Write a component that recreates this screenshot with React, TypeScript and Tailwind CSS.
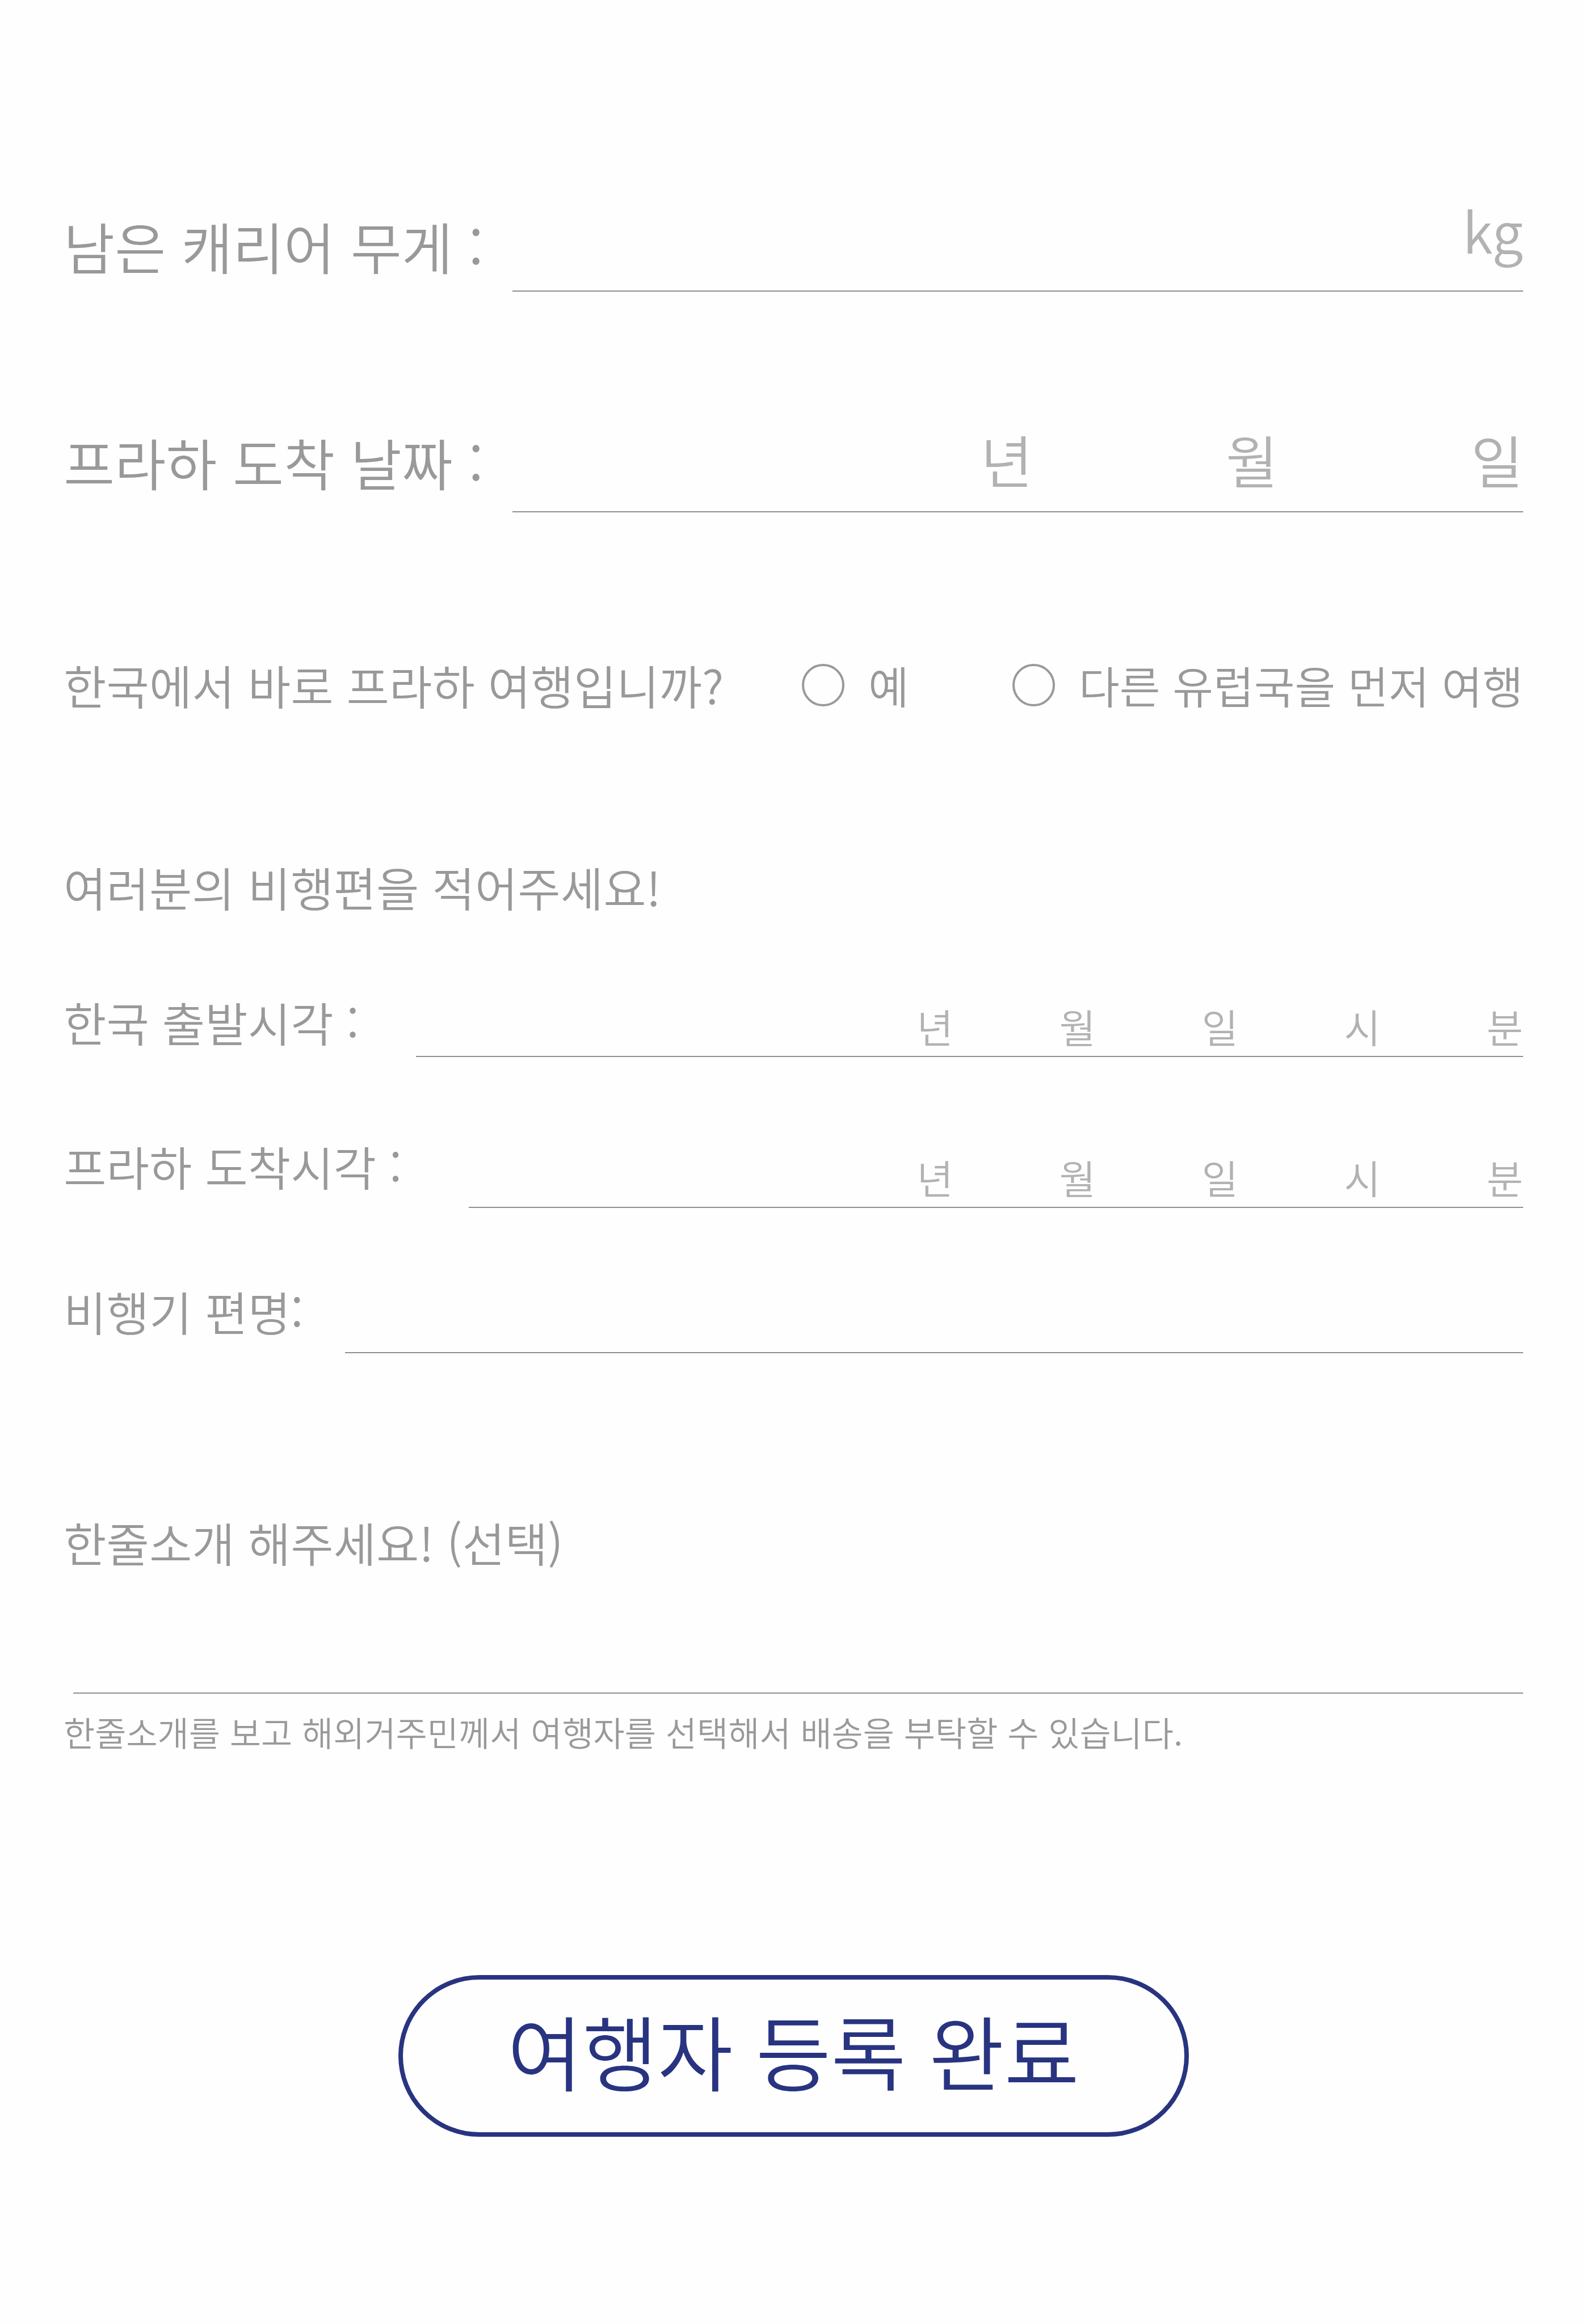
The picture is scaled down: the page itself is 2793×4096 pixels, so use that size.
import { useId } from "react";

const DATE = ["년", "월", "일"];
const DATE_TIME = [...DATE, "시", "분"];

const inputClass = "w-full min-w-0 flex-1 bg-transparent text-[#777777] outline-none";
const lineClass = "flex min-w-0 flex-1 items-end border-b-2 border-[#8e8e96]";

/** A run of short inputs, each followed by its unit. */
function UnitInputs({ label, units, size }: { label: string; units: string[]; size: "lg" | "sm" }) {
  const lg = size === "lg";
  return (
    <>
      {units.map((unit, i) => (
        <label
          key={unit}
          className={
            "flex items-end text-[#b2b2b2] " +
            (lg ? "pb-[32px] text-[100px] leading-[120px] " : "pb-[10px] text-[70px] leading-[84px] ") +
            (i === 0 ? "min-w-0 flex-1" : lg ? "w-[432px] shrink-0" : "w-[251px] shrink-0")
          }
        >
          <input type="text" aria-label={`${label} ${unit}`} className={inputClass} />
          <span>{unit}</span>
        </label>
      ))}
    </>
  );
}

function Choice({ text, value }: { text: string; value: string }) {
  return (
    <label className="flex items-center gap-[42px]">
      <input
        type="radio"
        name="direct"
        value={value}
        className="size-[75px] appearance-none rounded-full border-4 border-[#999999] checked:bg-[#999999]"
      />
      <span className="text-[78px] leading-[100px]">{text}</span>
    </label>
  );
}

export default function App() {
  const weight = useId();
  const flight = useId();
  const intro = useId();

  return (
    <main
      lang="ko"
      className="min-h-screen w-full bg-[#fefefe] pt-[344px] pr-[109px] pb-[300px] pl-[112px] font-['Noto_Sans_CJK_KR',sans-serif] font-[350] text-[#999999]"
    >
      <form onSubmit={(e) => e.preventDefault()}>
        <div className="flex items-end text-[98px] leading-[120px]">
          <label htmlFor={weight} className="w-[791px] shrink-0 pb-[22px] whitespace-nowrap">
            남은 캐리어 무게 :
          </label>
          <div className={lineClass + " pb-[48px]"}>
            <input id={weight} type="text" inputMode="decimal" className={inputClass} />
            <span className="text-[#b2b2b2]">kg</span>
          </div>
        </div>

        <div className="mt-[235px] flex items-end text-[98px] leading-[120px]">
          <span className="w-[791px] shrink-0 pb-[30px] whitespace-nowrap">프라하 도착 날짜 :</span>
          <div className={lineClass}>
            <UnitInputs label="프라하 도착 날짜" units={DATE} size="lg" />
          </div>
        </div>

        <fieldset className="mt-[254px] flex items-center">
          <legend className="float-left text-[82px] leading-[100px] whitespace-nowrap">
            한국에서 바로 프라하 여행입니까?
          </legend>
          <div className="ml-auto flex gap-[182px]">
            <Choice text="예" value="yes" />
            <Choice text="다른 유럽국을 먼저 여행" value="no" />
          </div>
        </fieldset>

        <section className="text-[82px] leading-[100px]">
          <h2 className="mt-[256px]">여러분의 비행편을 적어주세요!</h2>

          <div className="mt-[138px] flex items-end">
            <span className="w-[621px] shrink-0 pb-[12px] whitespace-nowrap">한국 출발시각 :</span>
            <div className={lineClass}>
              <UnitInputs label="한국 출발시각" units={DATE_TIME} size="sm" />
            </div>
          </div>

          <div className="mt-[142px] flex items-end">
            <span className="w-[714px] shrink-0 pb-[24px] whitespace-nowrap">프라하 도착시각 :</span>
            <div className={lineClass}>
              <UnitInputs label="프라하 도착시각" units={DATE_TIME} size="sm" />
            </div>
          </div>

          <div className="mt-[132px] flex items-end">
            <label htmlFor={flight} className="w-[496px] shrink-0 pb-[24px] whitespace-nowrap">
              비행기 편명:
            </label>
            <div className={lineClass}>
              <input id={flight} type="text" className={inputClass} />
            </div>
          </div>
        </section>

        <section className="mt-[283px] text-[82px] leading-[100px]">
          <label htmlFor={intro}>한줄소개 해주세요! (선택)</label>
          <div className="mt-[115px] ml-[17px] flex border-b-2 border-[#8e8e96]">
            <input id={intro} type="text" className={inputClass} />
          </div>
          <p className="mt-[29px] text-[60px] leading-[76px]">
            한줄소개를 보고 해외거주민께서 여행자를 선택해서 배송을 부탁할 수 있습니다.
          </p>
        </section>

        <button
          type="submit"
          className="mx-auto mt-[391px] flex h-[285px] w-[1393px] items-center justify-center rounded-full border-8 border-[#283480] pb-[24px] text-[144px] leading-[180px] text-[#283480]"
        >
          여행자 등록 완료
        </button>
      </form>
    </main>
  );
}
